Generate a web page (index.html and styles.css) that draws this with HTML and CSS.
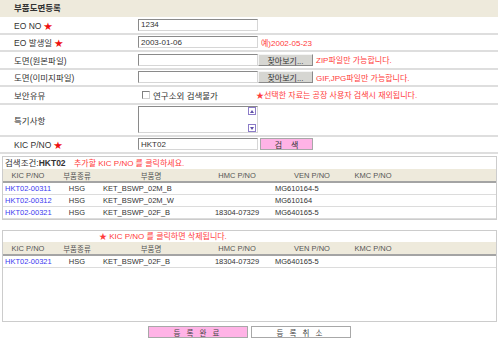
FILE: index.html
```html
<!DOCTYPE html>
<html lang="ko">
<head>
    <meta charset="UTF-8">
    <title>부품도면등록</title>
    <link rel="stylesheet" href="styles.css">
</head>
<body>
<div class="page">
    <div class="title">부품도면등록</div>

    <div class="row">
        <div class="label">EO NO <span class="star">★</span></div>
        <input class="field" type="text" value="1234">
    </div>
    <div class="row">
        <div class="label">EO 발생일 <span class="star">★</span></div>
        <input class="field" type="text" value="2003-01-06">
        <span class="note">예)2002-05-23</span>
    </div>
    <div class="row">
        <div class="label">도면(원본파일)</div>
        <input class="field" type="text">
        <button class="browse">찾아보기...</button>
        <span class="note">ZIP파일만 가능합니다.</span>
    </div>
    <div class="row">
        <div class="label">도면(이미지파일)</div>
        <input class="field" type="text">
        <button class="browse">찾아보기...</button>
        <span class="note">GIF,JPG파일만 가능합니다.</span>
    </div>
    <div class="row">
        <div class="label">보안유뮤</div>
        <span class="check"></span>
        <span class="check-text">연구소외 검색불가</span>
        <span class="note">★선택한 자료는 공장 사용자 검색시 재외됩니다.</span>
    </div>
    <div class="row tall">
        <div class="label">특기사항</div>
        <div class="memo">
            <div class="memo-text"></div>
            <div class="scroll">
                <span class="arrow"><i class="up"></i></span>
                <span class="arrow"><i class="down"></i></span>
            </div>
        </div>
    </div>
    <div class="row">
        <div class="label">KIC P/NO <span class="star">★</span></div>
        <input class="field" type="text" value="HKT02">
        <button class="find">검&nbsp;&nbsp;&nbsp;&nbsp;색</button>
    </div>

    <div class="panel">
        <div class="cond">검색조건:<b>HKT02</b> <span class="note">추가할 KIC P/NO 를 클릭하세요.</span></div>
        <table class="grid">
            <colgroup>
                <col style="width:50px"><col style="width:48px"><col style="width:100px">
                <col style="width:72px"><col style="width:78px"><col style="width:44px"><col>
            </colgroup>
            <tr><th>KIC P/NO</th><th>부품종류</th><th>부품명</th><th>HMC P/NO</th><th>VEN P/NO</th><th>KMC P/NO</th><th></th></tr>
            <tr><td class="link">HKT02-00311</td><td class="c">HSG</td><td>KET_BSWP_02M_B</td><td class="c"></td><td>MG610164-5</td><td></td><td></td></tr>
            <tr><td class="link">HKT02-00312</td><td class="c">HSG</td><td>KET_BSWP_02M_W</td><td class="c"></td><td>MG610164</td><td></td><td></td></tr>
            <tr><td class="link">HKT02-00321</td><td class="c">HSG</td><td>KET_BSWP_02F_B</td><td class="c">18304-07329</td><td>MG640165-5</td><td></td><td></td></tr>
        </table>
    </div>

    <div class="panel picked">
        <div class="cond hint"><span class="note">★ KIC P/NO 를 클릭하면 삭제됩니다.</span></div>
        <table class="grid">
            <colgroup>
                <col style="width:50px"><col style="width:48px"><col style="width:100px">
                <col style="width:72px"><col style="width:78px"><col style="width:44px"><col>
            </colgroup>
            <tr><th>KIC P/NO</th><th>부품종류</th><th>부품명</th><th>HMC P/NO</th><th>VEN P/NO</th><th>KMC P/NO</th><th></th></tr>
            <tr><td class="link">HKT02-00321</td><td class="c">HSG</td><td>KET_BSWP_02F_B</td><td class="c">18304-07329</td><td>MG640165-5</td><td></td><td></td></tr>
        </table>
        <div class="filler"></div>
    </div>

    <div class="actions">
        <button class="btn pink">등 록 완 료</button>
        <button class="btn">등 록 취 소</button>
    </div>
</div>
</body>
</html>
```

FILE: styles.css
```css
body {
    margin: 0;
    font-family: "Liberation Sans", "Noto Sans CJK KR", sans-serif;
    font-size: 8.5px;
    color: #333;
    background: #fff;
}
.page {
    width: 498px;
}
.title {
    height: 17px;
    line-height: 17px;
    padding-left: 14px;
    background: #eeeadc;
    font-weight: bold;
    font-size: 8.5px;
}
.row {
    display: flex;
    align-items: center;
    height: 15.5px;
    border-bottom: 2px solid #dedede;
}
.row.tall {
    height: 30px;
}
.label {
    width: 124px;
    padding-left: 14px;
}
.star {
    color: #ee1111;
}
.field {
    box-sizing: border-box;
    width: 120px;
    height: 12px;
    margin: 0;
    padding: 0 2px;
    border: 1px solid;
    border-color: #8a8a8a #d6d6d6 #d6d6d6 #8a8a8a;
    font-family: "Liberation Sans Narrow", "Liberation Sans", sans-serif;
    font-size: 8px;
    color: #333;
}
.browse {
    box-sizing: border-box;
    width: 55px;
    height: 12px;
    margin: 0;
    padding: 0;
    background: #d6d6d2;
    border: 1px solid;
    border-color: #f4f4f4 #8a8a8a #8a8a8a #f4f4f4;
    font-family: inherit;
    font-size: 8px;
    color: #333;
}
.note {
    margin-left: 3px;
    color: #ff3b3b;
    font-size: 8px;
}
.check {
    box-sizing: border-box;
    width: 8px;
    height: 8px;
    margin-left: 4px;
    border: 1px solid;
    border-color: #808080 #d0d0d0 #d0d0d0 #808080;
}
.check-text {
    width: 100px;
    margin-left: 3px;
}
.memo {
    box-sizing: border-box;
    display: flex;
    width: 120px;
    height: 27px;
    border: 1px solid;
    border-color: #8a8a8a #d6d6d6 #d6d6d6 #8a8a8a;
}
.memo-text {
    flex: 1;
}
.scroll {
    display: flex;
    flex-direction: column;
    justify-content: space-between;
    width: 9px;
}
.arrow {
    box-sizing: border-box;
    display: flex;
    align-items: center;
    justify-content: center;
    width: 8px;
    height: 8px;
    border: 1px solid #8c7cc8;
    background: #fff;
}
.arrow i {
    width: 0;
    height: 0;
    border-left: 2.5px solid transparent;
    border-right: 2.5px solid transparent;
}
.arrow .up {
    border-bottom: 3px solid #6050a8;
}
.arrow .down {
    border-top: 3px solid #6050a8;
}
.find {
    box-sizing: border-box;
    width: 53px;
    height: 12px;
    margin: 0 0 0 2px;
    padding: 0;
    background: #ffb3e6;
    border: 1px solid #a8a8a8;
    font-family: inherit;
    font-size: 8px;
    color: #333;
}
.panel {
    margin: 2px 1px 0 2px;
    border: 1px solid #cccccc;
}
.panel.picked {
    margin-top: 10px;
}
.cond {
    height: 12px;
    line-height: 12px;
    padding-left: 2px;
}
.cond .note {
    margin-left: 6px;
}
.cond.hint {
    height: 11px;
    line-height: 11px;
    padding-left: 90px;
}
.grid {
    width: 100%;
    border-collapse: collapse;
    table-layout: fixed;
}
.grid th {
    height: 12px;
    padding: 0;
    background: #eeeadc;
    border-bottom: 2px solid #a4a4a4;
    font-weight: normal;
    font-size: 7.5px;
    color: #555;
    text-align: center;
}
.grid td {
    height: 11px;
    padding: 0 0 0 2px;
    border-bottom: 1px solid #dcdcdc;
    font-size: 7.5px;
    white-space: nowrap;
    overflow: hidden;
}
.grid td.c {
    text-align: center;
    padding: 0;
}
.grid td.link {
    color: #3a3af0;
}
.filler {
    height: 53px;
}
.actions {
    display: flex;
    justify-content: center;
    gap: 3px;
    margin-top: 4px;
}
.btn {
    box-sizing: border-box;
    width: 100px;
    height: 12px;
    margin: 0;
    padding: 0;
    background: #fff;
    border: 1px solid #a8a8a8;
    font-family: inherit;
    font-size: 7.5px;
    letter-spacing: 2px;
    color: #444;
}
.btn.pink {
    background: #ffb3e6;
}
```
